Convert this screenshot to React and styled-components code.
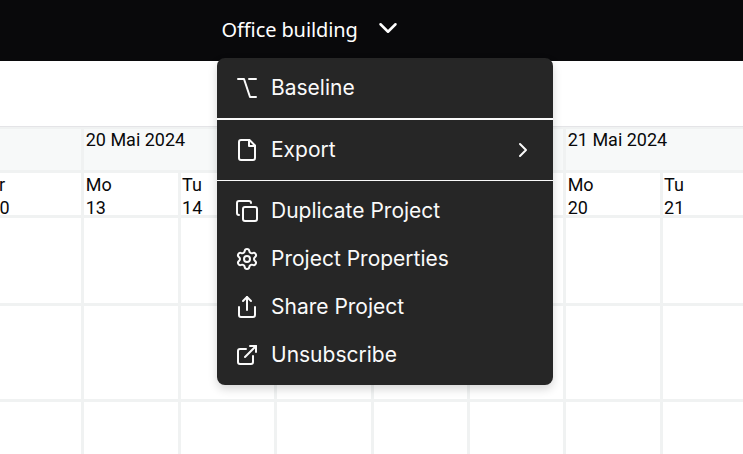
import React from 'react'
import styled, {createGlobalStyle} from 'styled-components'
import {ChevronDown, ChevronRight, Copy, ExternalLink, Option, Share} from 'lucide-react'

const GlobalStyle = createGlobalStyle`
  * {
    box-sizing: border-box;
  }
  body {
    margin: 0;
    overflow: hidden;
    background: #fff;
  }
`

const Page = styled.div`
  width: 743px;
  height: 454px;
  overflow: hidden;
`

const Header = styled.header`
  position: relative;
  height: 61px;
  padding: 0 0 5px 221.5px;
  display: flex;
  align-items: center;
  background: #09090b;
  color: #fff;
`

const ProjectButton = styled.div`
  display: flex;
  align-items: center;
  gap: 15px;
  font: 20px/28px 'Noto Sans', sans-serif;
  letter-spacing: -0.1px;
  white-space: nowrap;
`

const ProjectName = styled.span`
  padding-top: 4px;
`

const Menu = styled.div`
  position: absolute;
  top: 58px;
  left: 217px;
  width: 336px;
  height: 327px;
  padding-top: 6px;
  border-radius: 8px;
  background: #262626;
  color: #fafafa;
  box-shadow: 0 4px 10px rgba(0, 0, 0, 0.16);
`

const MenuItem = styled.div`
  height: 48px;
  padding: 0 18px;
  display: flex;
  align-items: center;
  gap: 12px;
  font: 21px/30px Inter, sans-serif;
  white-space: nowrap;
`

const Label = styled.span`
  flex: 1;
`

const Divider = styled.div`
  height: ${props => props.$size}px;
  margin: 6px 0;
  background: #fafafa;
`

const Toolbar = styled.div`
  height: 66px;
  border-bottom: 1px solid #e4e4e7;
  background: #fff;
`

const Calendar = styled.div`
  width: 743px;
  overflow: hidden;
  background: #f0f2f2;
  font: 18px/23px Roboto, sans-serif;
  color: #09090b;
`

const Row = styled.div`
  display: flex;
  width: 920px;
  height: ${props => props.$height}px;
  margin-left: -108.4px;
  padding-top: ${props => props.$top || 3}px;
`

const Cell = styled.div`
  flex: none;
  width: ${props => props.$span * 96.4}px;
  padding-right: 3px;
`

const Fill = styled.div`
  height: 100%;
  padding-left: 1.3px;
  line-height: ${props => props.$line || 23}px;
  background: ${props => props.$bg || '#fff'};
`

const weeks = [
  {span: 2, label: ''},
  {span: 5, label: '20 Mai 2024'},
  {span: 2, label: '21 Mai 2024'},
]

const days = [['', ''], ['Fr', '10'], ['Mo', '13'], ['Tu', '14'], ['We', '15'], ['Th', '16'], ['Fr', '17'], ['Mo', '20'], ['Tu', '21']]

const rows = [88, 96, 96]

function GearIcon() {
  return (
    <svg width='24' height='24' viewBox='0 0 24 24' fill='none' stroke='currentColor' strokeWidth='2' strokeLinejoin='round'>
      <path d='M9.67 4.14a2.34 2.34 0 0 1 4.66 0 2.34 2.34 0 0 0 3.32 1.91 2.34 2.34 0 0 1 2.33 4.04 2.34 2.34 0 0 0 0 3.83 2.34 2.34 0 0 1-2.33 4.03 2.34 2.34 0 0 0-3.32 1.92 2.34 2.34 0 0 1-4.66 0 2.34 2.34 0 0 0-3.32-1.92 2.34 2.34 0 0 1-2.33-4.03 2.34 2.34 0 0 0 0-3.83A2.34 2.34 0 0 1 6.35 6.05a2.34 2.34 0 0 0 3.32-1.91' />
      <circle cx='12' cy='12' r='3' />
    </svg>
  )
}

function FileIcon() {
  return (
    <svg width='24' height='24' viewBox='0 0 24 24' fill='none' stroke='currentColor' strokeWidth='2' strokeLinecap='round' strokeLinejoin='round'>
      <path d='M14.5 2H6a2 2 0 0 0-2 2v16a2 2 0 0 0 2 2h12a2 2 0 0 0 2-2V7.5L14.5 2z' />
      <path d='M14 2v6h6' />
    </svg>
  )
}

function ProjectMenu() {
  return (
    <Menu>
      <MenuItem><Option /><Label>Baseline</Label></MenuItem>
      <Divider $size={2} />
      <MenuItem><FileIcon /><Label>Export</Label><ChevronRight /></MenuItem>
      <Divider $size={1} />
      <MenuItem><Copy /><Label>Duplicate Project</Label></MenuItem>
      <MenuItem><GearIcon /><Label>Project Properties</Label></MenuItem>
      <MenuItem><Share /><Label>Share Project</Label></MenuItem>
      <MenuItem><ExternalLink /><Label>Unsubscribe</Label></MenuItem>
    </Menu>
  )
}

function App() {
  return (
    <Page>
      <GlobalStyle />
      <Header>
        <ProjectButton>
          <ProjectName>Office building</ProjectName>
          <ChevronDown size={30} />
        </ProjectButton>
        <ProjectMenu />
      </Header>
      <Toolbar />
      <Calendar>
        <Row $height={43} $top={2}>
          {weeks.map((week, i) => (
            <Cell key={i} $span={week.span}>
              <Fill $bg='#f7f9f9' $line={21}>{week.label}</Fill>
            </Cell>
          ))}
        </Row>
        <Row $height={45}>
          {days.map(([day, date], i) => (
            <Cell key={i} $span={1}>
              <Fill>{day}<br />{date}</Fill>
            </Cell>
          ))}
        </Row>
        {rows.map((height, i) => (
          <Row key={i} $height={height}>
            {days.map((_, j) => (
              <Cell key={j} $span={1}><Fill /></Cell>
            ))}
          </Row>
        ))}
      </Calendar>
    </Page>
  )
}

export default App
